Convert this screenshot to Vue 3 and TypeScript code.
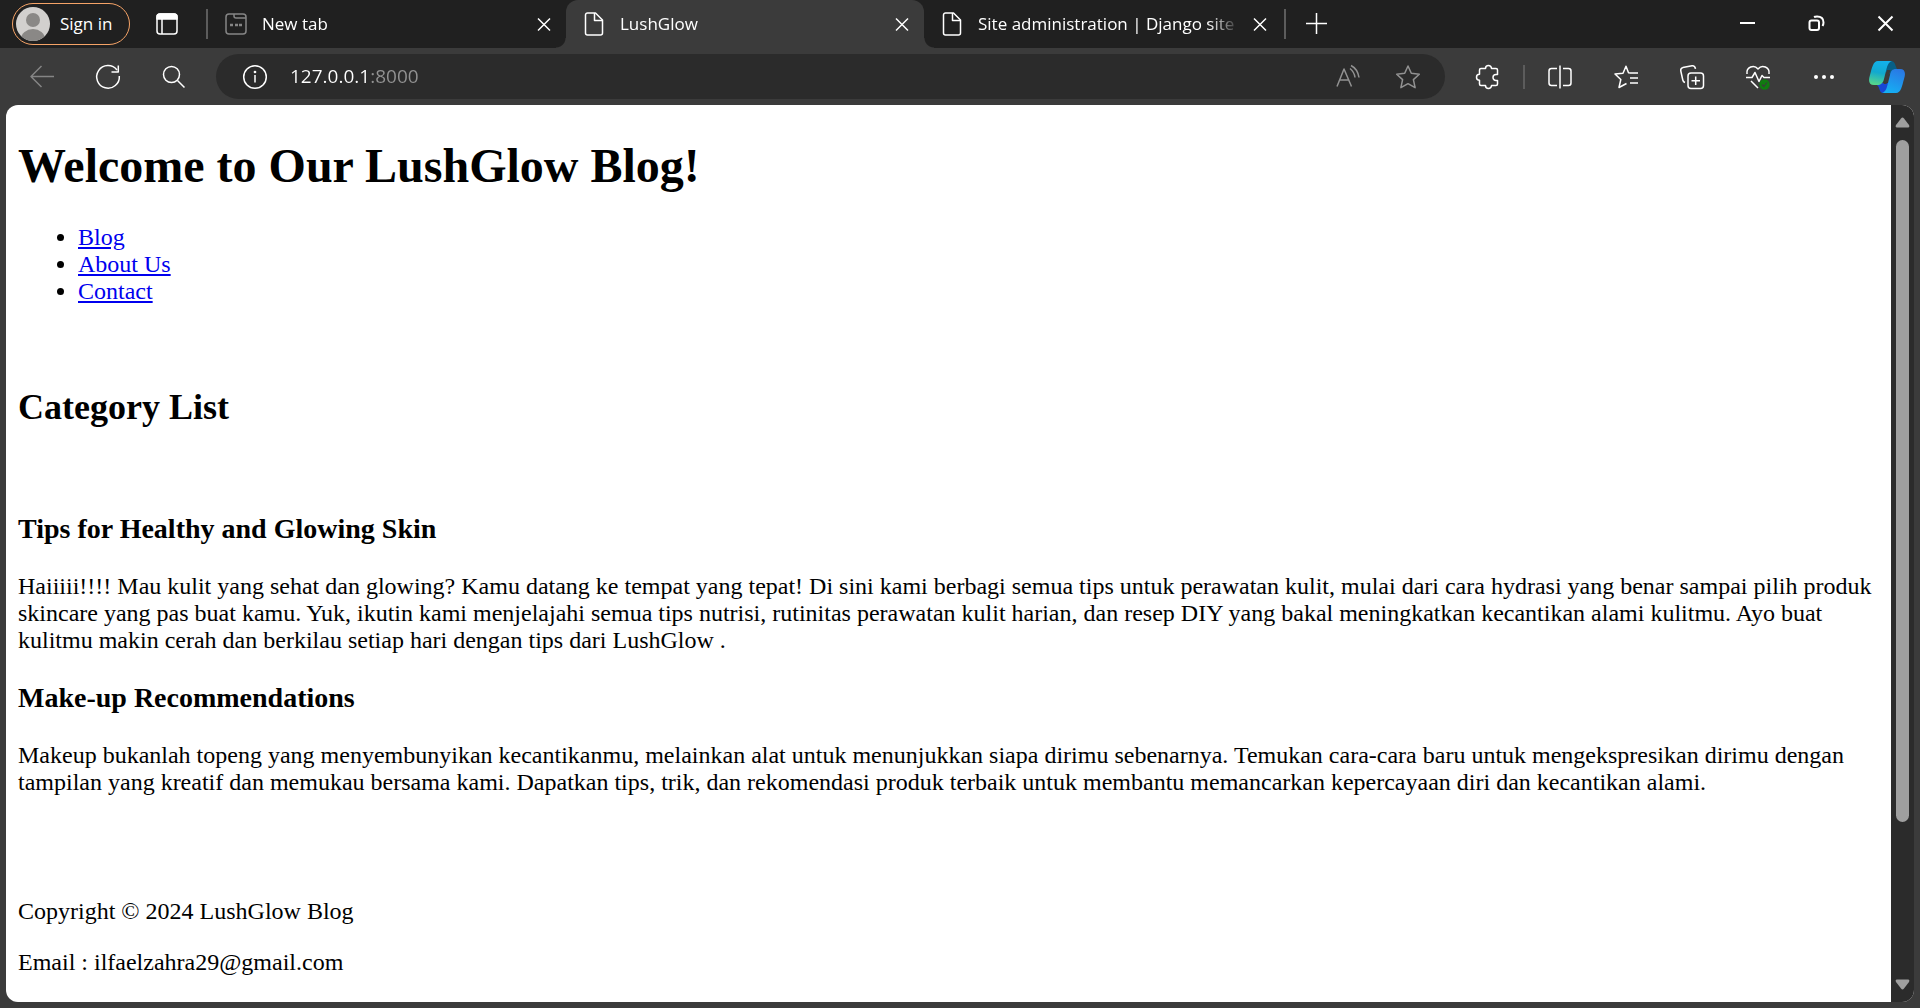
<script setup lang="ts">
import { ref } from 'vue'

interface Tab {
  title: string
  icon: 'new' | 'page'
  active: boolean
}

interface Article {
  heading: string
  body: string
}

const tabs: Tab[] = [
  { title: 'New tab', icon: 'new', active: false },
  { title: 'LushGlow', icon: 'page', active: true },
  { title: 'Site administration | Django site admin', icon: 'page', active: false },
]

const links: string[] = ['Blog', 'About Us', 'Contact']

const articles: Article[] = [
  {
    heading: 'Tips for Healthy and Glowing Skin',
    body: 'Haiiiii!!!! Mau kulit yang sehat dan glowing? Kamu datang ke tempat yang tepat! Di sini kami berbagi semua tips untuk perawatan kulit, mulai dari cara hydrasi yang benar sampai pilih produk skincare yang pas buat kamu. Yuk, ikutin kami menjelajahi semua tips nutrisi, rutinitas perawatan kulit harian, dan resep DIY yang bakal meningkatkan kecantikan alami kulitmu. Ayo buat kulitmu makin cerah dan berkilau setiap hari dengan tips dari LushGlow .',
  },
  {
    heading: 'Make-up Recommendations',
    body: 'Makeup bukanlah topeng yang menyembunyikan kecantikanmu, melainkan alat untuk menunjukkan siapa dirimu sebenarnya. Temukan cara-cara baru untuk mengekspresikan dirimu dengan tampilan yang kreatif dan memukau bersama kami. Dapatkan tips, trik, dan rekomendasi produk terbaik untuk membantu memancarkan kepercayaan diri dan kecantikan alami.',
  },
]

const address = ref('127.0.0.1:8000')
</script>

<template>
  <div class="browser">
    <header class="titlebar">
      <button class="profile" type="button">
        <svg class="avatar" viewBox="0 0 34 34" aria-hidden="true">
          <defs><clipPath id="face"><circle cx="17" cy="17" r="17" /></clipPath></defs>
          <g clip-path="url(#face)">
            <rect width="34" height="34" fill="#d2d0ce" />
            <circle cx="17" cy="13" r="7" fill="#8a8886" />
            <ellipse cx="17" cy="32" rx="12" ry="10" fill="#8a8886" />
          </g>
        </svg>
        <span class="label">Sign in</span>
      </button>
      <button class="actions" type="button" aria-label="Tab actions">
        <svg class="icon" viewBox="0 0 24 24">
          <rect x="2" y="2" width="20" height="20" rx="3" />
          <path d="M2 7V5a3 3 0 0 1 3-3h14a3 3 0 0 1 3 3v2z" fill="currentColor" />
          <path d="M7 7v15" />
        </svg>
      </button>
      <span class="rule"></span>

      <nav class="tabs" aria-label="Tabs">
        <div v-for="tab in tabs" :key="tab.title" class="tab" :class="{ active: tab.active }">
          <svg v-if="tab.icon === 'new'" class="icon dim" viewBox="0 0 24 24" aria-hidden="true">
            <rect x="2" y="2" width="20" height="20" rx="3" />
            <path d="M10 2v2a2 2 0 0 0 2 2h10" />
            <path d="M6 13h3M11 13h3M15 13h3" stroke-width="2.4" />
          </svg>
          <svg v-else class="icon" viewBox="0 0 24 24" aria-hidden="true">
            <path d="M5.500 1h8l7 7v13a2 2 0 0 1-2 2h-13a2 2 0 0 1-2-2V3a2 2 0 0 1 2-2z" />
            <path d="M12.500 1v7.500h8" />
          </svg>
          <span class="title label">{{ tab.title }}</span>
          <button class="close" type="button" aria-label="Close tab">
            <svg class="icon" viewBox="0 0 24 24"><path d="M6 6.500l12 12M18 6.500L6 18.500" /></svg>
          </button>
        </div>
      </nav>
      <span class="rule"></span>
      <button class="plus" type="button" aria-label="New tab">
        <svg class="icon" viewBox="0 0 24 24"><path d="M2 11.500h21M12.500 1v21" /></svg>
      </button>

      <div class="window">
        <button type="button" aria-label="Minimize">
          <svg class="icon bold" viewBox="0 0 24 24"><path d="M4 11h15" /></svg>
        </button>
        <button type="button" aria-label="Restore">
          <svg class="icon bold" viewBox="0 0 24 24">
            <rect x="4.500" y="8.500" width="9.500" height="9.500" rx="2" />
            <path d="M9 5c1-.5 2-.5 3-.5 4 0 6.500 2 6.500 6 0 1 0 2-1 3.500" />
          </svg>
        </button>
        <button type="button" aria-label="Close">
          <svg class="icon bold" viewBox="0 0 24 24"><path d="M4.500 4.500l14 14M18.500 4.500l-14 14" /></svg>
        </button>
      </div>
    </header>

    <div class="toolbar">
      <button class="tool dim" type="button" aria-label="Back">
        <svg class="icon" viewBox="0 0 24 24"><path d="M24 11.500H1M11.500 1L1 11.500 11.500 22" /></svg>
      </button>
      <button class="tool" type="button" aria-label="Refresh">
        <svg class="icon" viewBox="0 0 24 24">
          <path d="M23.300 11A11.300 11.300 0 1 1 21 5" />
          <path d="M22.300 .5V7H15.500" />
        </svg>
      </button>
      <button class="tool" type="button" aria-label="Search">
        <svg class="icon" viewBox="0 0 24 24">
          <circle cx="9.500" cy="9.500" r="8" />
          <path d="M15.500 15.500l7 7" />
        </svg>
      </button>

      <div class="address">
        <button class="info" type="button" aria-label="View site information">
          <svg class="icon" viewBox="0 0 24 24">
            <circle cx="12" cy="12" r="11.300" />
            <path d="M12 10v7.500" />
            <circle cx="12" cy="7" r=".6" fill="currentColor" />
          </svg>
        </button>
        <input v-model="address" class="url" type="text" aria-label="Address" spellcheck="false" />
        <button class="inner" type="button" aria-label="Read aloud">
          <svg class="icon" viewBox="0 0 24 24">
            <path d="M1 21.500L8 4l7.500 17.500M3.800 15h9" />
            <path d="M14 3.500c2.500 2 4.500 5 5 9M15 .5c4 2 7 6 8 12" />
          </svg>
        </button>
        <button class="inner" type="button" aria-label="Add to favorites">
          <svg class="icon" viewBox="0 0 24 24">
            <path d="M12 1l3.300 7.300 8 .9-5.900 5.400 1.700 8.100L12 18.700l-7.100 4 1.700-8.100L.7 9.200l8-.9z" />
          </svg>
        </button>
      </div>

      <button class="tool" type="button" aria-label="Extensions">
        <svg class="icon" viewBox="0 0 24 24">
          <path d="M5 3.500h4.500a3 3 0 0 1 6 0H20a1.500 1.500 0 0 1 1.500 1.500v4.500h-1.500a3 3 0 0 0 0 6h1.500V19a1.500 1.500 0 0 1-1.500 1.500h-4.500a3 3 0 0 1-6 0H5A1.500 1.500 0 0 1 3.500 19v-3.800a3 3 0 0 1 0-6V5A1.500 1.500 0 0 1 5 3.500z" />
        </svg>
      </button>
      <span class="rule short"></span>
      <button class="tool" type="button" aria-label="Split screen">
        <svg class="icon" viewBox="0 0 24 24">
          <path d="M9 3.500H3.500a2.500 2.500 0 0 0-2.500 2.500v12a2.500 2.500 0 0 0 2.500 2.500H9M15 3.500h5.500A2.500 2.500 0 0 1 23 6v12a2.500 2.500 0 0 1-2.500 2.500H15M12 .5v23" />
        </svg>
      </button>
      <button class="tool" type="button" aria-label="Favorites">
        <svg class="icon" viewBox="0 0 24 24">
          <path d="M16 8l-1.500-.3L12 1.200 9 8.200 1 9l5.800 5.500L5 22.500l7.500-4M16 8h8M16 13h8M16 18h8" />
        </svg>
      </button>
      <button class="tool" type="button" aria-label="Collections">
        <svg class="icon" viewBox="0 0 24 24">
          <rect x="8" y="8" width="15.500" height="15.500" rx="3" />
          <path d="M15.700 11.500v8.500M11.500 15.700h8.500M5 17.500C3.500 17 3 16 2.800 15L.8 6c-.4-2 .5-3 2-3.400L12 .8c2-.3 3 .5 3.500 3" />
        </svg>
      </button>
      <button class="tool" type="button" aria-label="Browser essentials">
        <svg class="icon" viewBox="0 0 24 24">
          <path d="M1 9C0 2 8-1 12 4c4-5 12-2 11 5M0 12.500h6l3-5 4 9 3-6 2 2h6M5 16l7 7" />
          <circle cx="18.500" cy="19.500" r="5.200" fill="#107c10" stroke="none" />
          <path d="M16 19.500l2 2 3-4" stroke="#3b3b3b" stroke-width="1.200" />
        </svg>
      </button>
      <button class="tool" type="button" aria-label="Settings and more">
        <svg class="icon" viewBox="0 0 24 24">
          <g fill="currentColor" stroke="none">
            <circle cx="4" cy="12" r="2" /><circle cx="12" cy="12" r="2" /><circle cx="20" cy="12" r="2" />
          </g>
        </svg>
      </button>
      <button class="copilot" type="button" aria-label="Copilot">
        <svg viewBox="0 0 36 32">
          <defs>
            <linearGradient id="left" x1="0.600" y1="0" x2="0.400" y2="1">
              <stop offset="0" stop-color="#12b1ec" /><stop offset=".5" stop-color="#12a9cf" /><stop offset="1" stop-color="#55d68c" />
            </linearGradient>
            <linearGradient id="right" x1="0.700" y1="0" x2="0.300" y2="1">
              <stop offset="0" stop-color="#2a78e4" /><stop offset="1" stop-color="#15b0f4" />
            </linearGradient>
          </defs>
          <path d="M17 0h5c4 0 4 4 6 8-4 0-5 2-6 6l-6-4z" fill="#075f86" />
          <path d="M8 22h12l-3 10h-3c-4 0-3-6-6-8z" fill="#1747d6" />
          <path d="M9 0h14c-4 1-5 6-6 10l-2 8c-1 4-3 6-7 6H5c-5 0-6-4-4-10C3 7 4 0 9 0z" fill="url(#left)" />
          <path d="M27 8h4c5 0 6 4 4 10-2 7-3 14-8 14H13c4-1 5-6 6-10l2-8c1-4 2-6 6-6z" fill="url(#right)" />
          <path d="M18 9h3.500l-4 14H14.500z" fill="#3b3b3b" />
        </svg>
      </button>
    </div>

    <div class="view">
      <main class="page">
        <h1>Welcome to Our LushGlow Blog!</h1>
        <ul>
          <li v-for="link in links" :key="link"><a href="#">{{ link }}</a></li>
        </ul>
        <br />
        <h2>Category List</h2>
        <br />
        <template v-for="article in articles" :key="article.heading">
          <h3>{{ article.heading }}</h3>
          <p>{{ article.body }}</p>
        </template>
        <br />
        <br />
        <footer>
          <p>Copyright © 2024 LushGlow Blog</p>
          <p>Email : ilfaelzahra29@gmail.com</p>
        </footer>
      </main>
      <div class="scrollbar" aria-hidden="true">
        <svg viewBox="0 0 15 11"><path d="M6 1.500q1.500-1.800 3 0l5 6.500q1 2.500-1 2.500H2q-2 0-1-2.500z" /></svg>
        <span class="thumb"></span>
        <span class="rest"></span>
        <svg viewBox="0 0 15 11"><path d="M6 9.500q1.500 1.800 3 0l5-6.500q1-2.500-1-2.500H2q-2 0-1 2.500z" /></svg>
      </div>
    </div>
  </div>
</template>

<style>
body {
  margin: 0;
  background: #3b3b3b;
}
</style>

<style scoped>
.browser {
  display: flex;
  flex-direction: column;
  min-height: 100vh;
  background: #3b3b3b;
  color: #fff;
  font-family: "Open Sans", "Noto Sans", sans-serif;
  font-size: 17px;
}

button {
  display: flex;
  align-items: center;
  justify-content: center;
  flex: none;
  padding: 0;
  border: 0;
  background: none;
  color: inherit;
  font: inherit;
}

.icon {
  flex: none;
  width: 24px;
  height: 24px;
  fill: none;
  stroke: currentColor;
  stroke-width: 1.5;
  stroke-linejoin: round;
  overflow: visible;
}

.icon.bold {
  stroke-width: 2;
}

.dim {
  color: #858585;
}

.label {
  padding-bottom: 2px;
}

.titlebar {
  display: flex;
  align-items: center;
  height: 48px;
  background: #202020;
}

.profile {
  box-sizing: border-box;
  justify-content: flex-start;
  gap: 10px;
  width: 118px;
  height: 42px;
  margin-left: 12px;
  padding-left: 3px;
  border: 1px solid #f5a367;
  border-radius: 21px;
  white-space: nowrap;
}

.avatar {
  width: 34px;
  height: 34px;
}

.actions {
  width: 74px;
  height: 48px;
}

.rule {
  flex: none;
  width: 2px;
  height: 30px;
  margin-left: 2px;
  background: #5c5c5c;
}

.rule.short {
  height: 24px;
}

.tabs {
  display: flex;
  flex: 0 1 1074px;
  min-width: 0;
  height: 48px;
}

.tab {
  position: relative;
  box-sizing: border-box;
  display: flex;
  flex: 1 1 0;
  align-items: center;
  min-width: 0;
  padding: 0 10px 0 16px;
}

.title {
  flex: 1;
  min-width: 0;
  margin: 0 8px 0 14px;
  overflow: hidden;
  white-space: nowrap;
  mask-image: linear-gradient(to right, #000 calc(100% - 32px), transparent);
}

.active {
  border-radius: 12px 12px 0 0;
  background: #3b3b3b;
}

.active::before,
.active::after {
  content: "";
  position: absolute;
  bottom: 0;
  width: 10px;
  height: 10px;
}

.active::before {
  right: 100%;
  background: radial-gradient(circle at 0 0, transparent 9px, #3b3b3b 10px);
}

.active::after {
  left: 100%;
  background: radial-gradient(circle at 100% 0, transparent 9px, #3b3b3b 10px);
}

.close {
  width: 24px;
  height: 24px;
}

.plus {
  width: 60px;
  height: 48px;
}

.window {
  display: flex;
  margin-left: auto;
}

.window button {
  width: 69px;
  height: 48px;
}

.toolbar {
  display: flex;
  align-items: center;
  height: 57px;
  padding: 0 3px 0 9px;
}

.tool {
  width: 66px;
  height: 45px;
}

.toolbar .rule {
  margin: 0 2px;
}

.address {
  display: flex;
  flex: 1;
  align-items: center;
  min-width: 0;
  height: 45px;
  margin: 0 10px 0 9px;
  padding-right: 7px;
  border-radius: 23px;
  background: #2b2b2b;
}

.info {
  width: 48px;
  height: 45px;
  margin-left: 15px;
}

.url {
  flex: 1;
  min-width: 0;
  height: 45px;
  margin: 0;
  padding: 0 0 2px 11px;
  border: 0;
  outline: 0;
  background: linear-gradient(to right, #fff 92px, #929292 92px) text;
  color: transparent;
  font: 19px "Open Sans", "Noto Sans", sans-serif;
}

.inner {
  width: 60px;
  height: 45px;
  color: #929292;
}

.copilot {
  width: 60px;
  height: 45px;
}

.copilot svg {
  width: 36px;
  height: 32px;
}

.view {
  display: flex;
  flex: 1;
  margin: 0 6px 6px;
  overflow: hidden;
  border-radius: 12px;
  background: #fff;
}

.page {
  display: flow-root;
  flex: 1;
  min-width: 0;
  padding: 0 12px;
  color: #000;
  font: 24px/27px "Liberation Serif", "Times New Roman", serif;
}

h1 {
  margin: 32px 0 30px;
  font-size: 48px;
  line-height: 57px;
}

ul {
  margin: 0 0 24px;
  padding-left: 60px;
}

a {
  color: #00e;
}

h2 {
  margin: 30px 0;
  font-size: 36px;
  line-height: 42px;
}

h3 {
  margin: 28px 0;
  font-size: 28px;
  line-height: 32px;
}

p {
  margin: 24px 0;
}

.scrollbar {
  box-sizing: border-box;
  display: flex;
  flex: none;
  flex-direction: column;
  align-items: center;
  width: 23px;
  padding: 12px 0;
  background: #2b2b2b;
}

.scrollbar svg {
  width: 15px;
  height: 11px;
  fill: #9f9f9f;
}

.thumb {
  flex: 682;
  width: 13px;
  margin-top: 12px;
  border-radius: 7px;
  background: #9f9f9f;
}

.rest {
  flex: 157;
}
</style>
